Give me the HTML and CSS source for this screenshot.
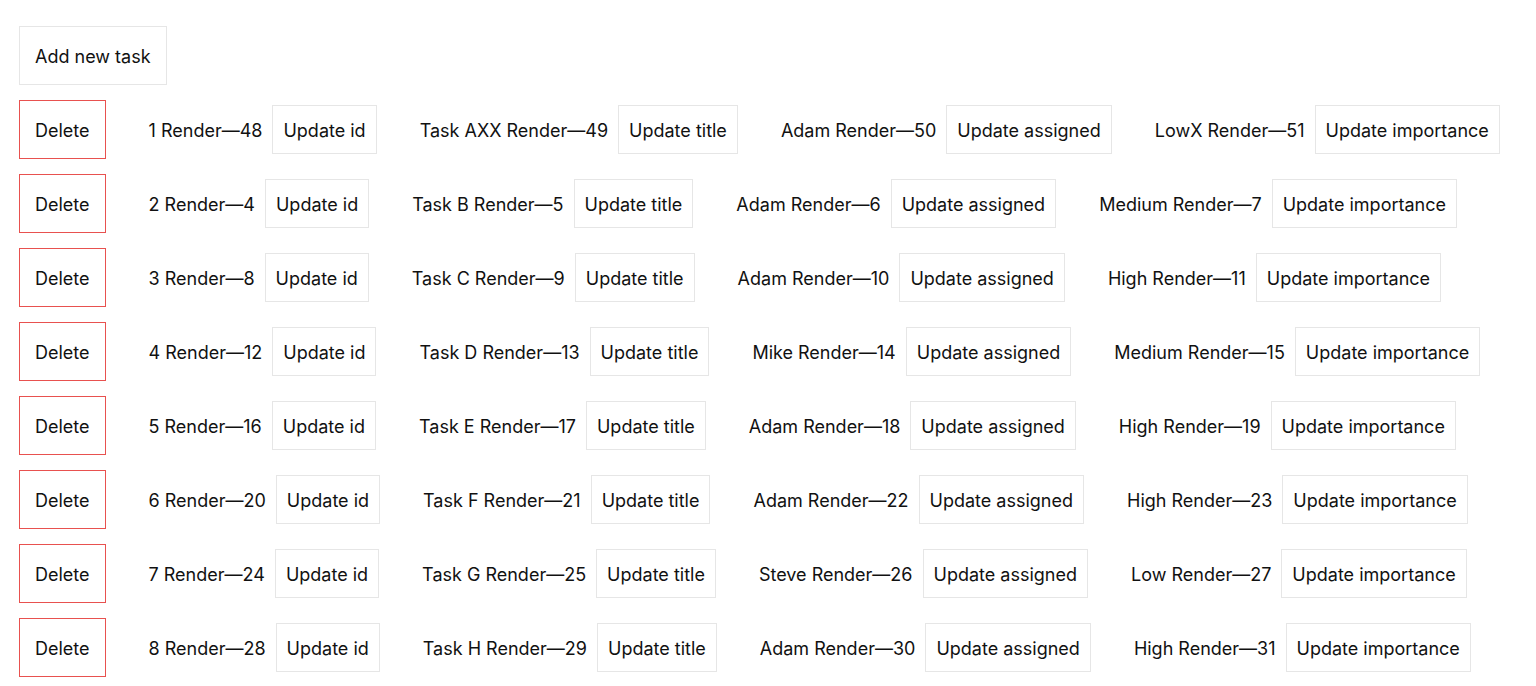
FILE: index.html
```html
<!DOCTYPE html>
<html>
<head>
<meta charset="utf-8">
<link rel="stylesheet" href="styles.css">
</head>
<body>
<div class="app">
  <div class="toolbar"><button class="btn big">Add new task</button></div>
  <div class="list">
    <div class="row">
      <button class="btn big danger">Delete</button>
      <div class="field"><span class="val">1 Render—48</span><button class="btn">Update id</button></div>
      <div class="field"><span class="val">Task AXX Render—49</span><button class="btn">Update title</button></div>
      <div class="field"><span class="val">Adam Render—50</span><button class="btn">Update assigned</button></div>
      <div class="field"><span class="val">LowX Render—51</span><button class="btn">Update importance</button></div>
    </div>
    <div class="row">
      <button class="btn big danger">Delete</button>
      <div class="field"><span class="val">2 Render—4</span><button class="btn">Update id</button></div>
      <div class="field"><span class="val">Task B Render—5</span><button class="btn">Update title</button></div>
      <div class="field"><span class="val">Adam Render—6</span><button class="btn">Update assigned</button></div>
      <div class="field"><span class="val">Medium Render—7</span><button class="btn">Update importance</button></div>
    </div>
    <div class="row">
      <button class="btn big danger">Delete</button>
      <div class="field"><span class="val">3 Render—8</span><button class="btn">Update id</button></div>
      <div class="field"><span class="val">Task C Render—9</span><button class="btn">Update title</button></div>
      <div class="field"><span class="val">Adam Render—10</span><button class="btn">Update assigned</button></div>
      <div class="field"><span class="val">High Render—11</span><button class="btn">Update importance</button></div>
    </div>
    <div class="row">
      <button class="btn big danger">Delete</button>
      <div class="field"><span class="val">4 Render—12</span><button class="btn">Update id</button></div>
      <div class="field"><span class="val">Task D Render—13</span><button class="btn">Update title</button></div>
      <div class="field"><span class="val">Mike Render—14</span><button class="btn">Update assigned</button></div>
      <div class="field"><span class="val">Medium Render—15</span><button class="btn">Update importance</button></div>
    </div>
    <div class="row">
      <button class="btn big danger">Delete</button>
      <div class="field"><span class="val">5 Render—16</span><button class="btn">Update id</button></div>
      <div class="field"><span class="val">Task E Render—17</span><button class="btn">Update title</button></div>
      <div class="field"><span class="val">Adam Render—18</span><button class="btn">Update assigned</button></div>
      <div class="field"><span class="val">High Render—19</span><button class="btn">Update importance</button></div>
    </div>
    <div class="row">
      <button class="btn big danger">Delete</button>
      <div class="field"><span class="val">6 Render—20</span><button class="btn">Update id</button></div>
      <div class="field"><span class="val">Task F Render—21</span><button class="btn">Update title</button></div>
      <div class="field"><span class="val">Adam Render—22</span><button class="btn">Update assigned</button></div>
      <div class="field"><span class="val">High Render—23</span><button class="btn">Update importance</button></div>
    </div>
    <div class="row">
      <button class="btn big danger">Delete</button>
      <div class="field"><span class="val">7 Render—24</span><button class="btn">Update id</button></div>
      <div class="field"><span class="val">Task G Render—25</span><button class="btn">Update title</button></div>
      <div class="field"><span class="val">Steve Render—26</span><button class="btn">Update assigned</button></div>
      <div class="field"><span class="val">Low Render—27</span><button class="btn">Update importance</button></div>
    </div>
    <div class="row">
      <button class="btn big danger">Delete</button>
      <div class="field"><span class="val">8 Render—28</span><button class="btn">Update id</button></div>
      <div class="field"><span class="val">Task H Render—29</span><button class="btn">Update title</button></div>
      <div class="field"><span class="val">Adam Render—30</span><button class="btn">Update assigned</button></div>
      <div class="field"><span class="val">High Render—31</span><button class="btn">Update importance</button></div>
    </div>
  </div>
</div>
</body>
</html>
```
FILE: styles.css
```css
html, body {
  margin: 0;
  padding: 0;
  background: #fff;
}
body {
  font-family: Inter, "Noto Sans", "Liberation Sans", sans-serif;
  font-size: 18px;
  color: #111;
}
.app {
  padding: 26px 19px 0 19px;
  display: flex;
  flex-direction: column;
  gap: 15px;
}
.list {
  display: flex;
  flex-direction: column;
  gap: 15px;
}
.row {
  display: flex;
  align-items: center;
  gap: 43px;
  height: 59px;
}
.field {
  display: flex;
  align-items: center;
  gap: 10px;
}
.val {
  white-space: nowrap;
  padding-top: 2px;
}
.btn {
  font: inherit;
  color: #111;
  background: #fff;
  border: 1px solid #e6e6e6;
  border-radius: 0;
  box-sizing: border-box;
  height: 49px;
  padding: 2px 10px 0 10px;
  line-height: 26px;
  white-space: nowrap;
  cursor: pointer;
}
.btn.big {
  height: 59px;
  padding: 2px 15px 0 15px;
}
.btn.danger {
  border-color: #e8514f;
}
.toolbar {
  display: flex;
}
```
